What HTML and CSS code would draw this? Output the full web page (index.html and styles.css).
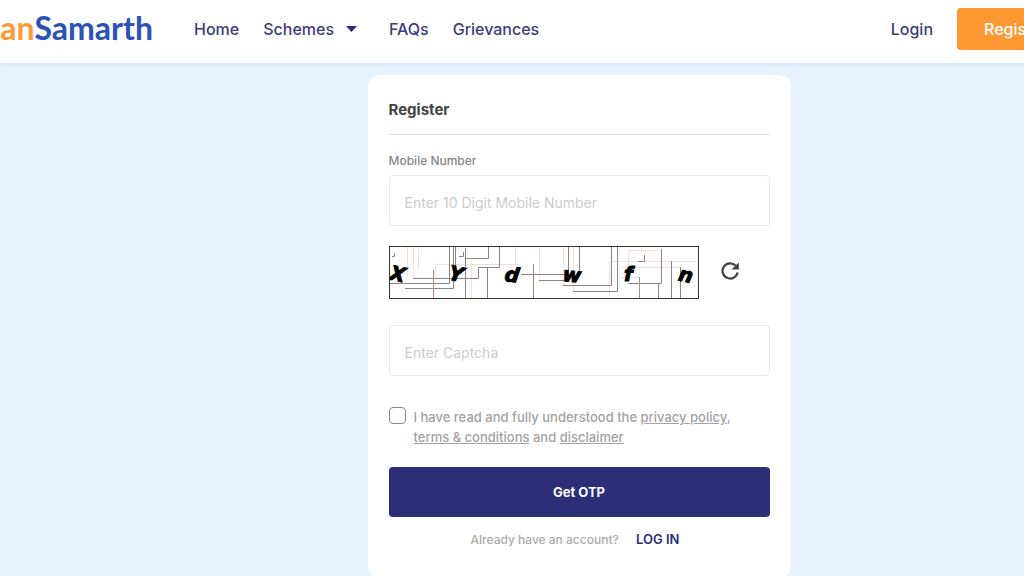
FILE: index.html
```html
<!DOCTYPE html>
<html lang="en">
<head>
    <meta charset="UTF-8">
    <meta name="viewport" content="width=device-width, initial-scale=1.0">
    <title>JanSamarth - Register</title>
    <link rel="stylesheet" href="styles.css">
</head>
<body>
    <div class="page">
        <header>
            <a class="logo" href="#"><span class="logo-jan">Jan</span>Samarth</a>
            <nav>
                <a href="#">Home</a>
                <a href="#" class="has-menu">Schemes
                    <svg width="11" height="6" viewBox="0 0 11 6" aria-hidden="true"><path d="M0 0h11L5.5 6z" fill="#2d2e78"/></svg>
                </a>
                <a href="#">FAQs</a>
                <a href="#">Grievances</a>
            </nav>
            <a class="login" href="#">Login</a>
            <button type="button" class="register-button">Register</button>
        </header>
        <main>
            <form class="card">
                <h1>Register</h1>
                <label class="field-label" for="mobile">Mobile Number</label>
                <input type="text" id="mobile" placeholder="Enter 10 Digit Mobile Number">

                <!-- Captcha image and reload -->
                <div class="captcha">
                    <svg class="captcha-image" width="310" height="53" viewBox="0 0 310 53" role="img" aria-label="Captcha">
                        <g fill="none" stroke="#f6ddd6">
                            <path d="M18.5 1v30M24.5 1v30M29.5 1v23M46.5 30V18.500H130M82.500 14v38M126.500 1v18M150.500 2v30"/>
                            <path d="M174.500 1v38M184.500 1v44M220.500 50V15.500H308M232.500 21.500H292M239.500 21V4.500H270M232 31.500h18"/>
                        </g>
                        <g fill="none" stroke="#8b8380">
                            <path d="M60.500 1v36.500H1M64.500 1v41.500H16M66.500 1v28M24 32.500h65.500v-11h21V1"/>
                            <path d="M76.500 2v50M76 12.500h23.500V1M98.500 21v31M144.500 18v34"/>
                            <path d="M132 28.500h45M150 34.500h29M179.500 1v30M190.500 1v27"/>
                            <path d="M174 39.500h48.500V1M184 45.500h44.500V1M272.500 3v34.500H239M269.500 38v14"/>
                            <path d="M282.500 15v37M291.500 21v31M255.500 9v6.500H249M5.500 7v3.500H3M74.500 6v4.500H70"/>
                        </g>
                        <path d="M44.500 24v28M250.500 31v21" stroke="#b08a80"/>
                        <g class="captcha-text">
                            <text x="1" y="35" transform="rotate(12 9 28)">X</text>
                            <text x="60" y="35" transform="rotate(12 68 28)">Y</text>
                            <text x="116" y="36" transform="rotate(8 124 28)">d</text>
                            <text x="174" y="36" transform="rotate(5 184 28)">w</text>
                            <text x="235" y="35">f</text>
                            <text x="290" y="36" transform="rotate(12 298 28)">n</text>
                        </g>
                        <rect x="0.500" y="0.500" width="309" height="52" fill="none" stroke="#333"/>
                    </svg>
                    <button type="button" class="reload" aria-label="Reload captcha">
                        <svg width="20" height="20" viewBox="0 0 20 20" aria-hidden="true">
                            <path d="M17.600 11.500A7.600 7.600 0 1 1 15.800 4.800" fill="none" stroke="#444" stroke-width="2.200"/>
                            <path d="M18.800 1.500V8.600H11.500z" fill="#444"/>
                        </svg>
                    </button>
                </div>

                <input type="text" id="captcha" placeholder="Enter Captcha" aria-label="Enter Captcha">

                <div class="terms">
                    <input type="checkbox" id="agree">
                    <label for="agree">I have read and fully understood the <a href="#">privacy policy</a>, <a href="#">terms &amp; conditions</a> and <a href="#">disclaimer</a></label>
                </div>

                <button type="submit" class="otp-button">Get OTP</button>
                <p class="account">Already have an account? <a href="#">LOG IN</a></p>
            </form>
        </main>
    </div>
</body>
</html>
```

FILE: styles.css
```css
* {
    box-sizing: border-box;
}

body {
    margin: 0;
    min-height: 100vh;
    overflow-x: hidden;
    background-color: #e6f2ff;
    font-family: Inter, "Liberation Sans", sans-serif;
    color: #444;
}

/* The page runs wider than the window */
.page {
    margin-right: -134px;
}

header {
    display: flex;
    align-items: center;
    height: 63px;
    padding: 0 84px 5px 0;
    background-color: white;
    box-shadow: 0 1px 4px rgba(60, 90, 140, 0.12);
}

header a {
    color: #3d3c7c;
    font-size: 16px;
    font-weight: 500;
    text-decoration: none;
}

header .logo {
    display: flex;
    justify-content: flex-end;
    width: 153px;
    overflow: hidden;
    font-family: Lato, "Liberation Sans", sans-serif;
    font-size: 32px;
    font-weight: bold;
    line-height: 44px;
    padding-bottom: 3px;
    color: #2b52b5;
}

header .logo-jan {
    color: #fd9a3a;
}

nav {
    display: flex;
    gap: 24px;
    margin-left: 41px;
    margin-right: auto;
}

.has-menu {
    display: flex;
    align-items: center;
    gap: 12px;
    margin-right: 8px;
}

.register-button {
    height: 42px;
    margin-left: 24px;
    padding: 0 27px;
    border: none;
    border-radius: 4px;
    background-color: #fe9833;
    color: white;
    font-family: inherit;
    font-size: 16px;
    font-weight: 500;
}

main {
    padding-top: 12px;
}

.card {
    width: 423px;
    margin: 0 auto;
    padding: 20px 21px;
    border-radius: 12px;
    background-color: white;
}

h1 {
    margin: 0 0 16px;
    padding-bottom: 9px;
    border-bottom: 1px solid #e2e2e2;
    font-size: 15px;
    font-weight: 700;
    line-height: 30px;
}

.field-label {
    display: block;
    margin-bottom: 4px;
    color: #888;
    font-size: 12px;
    font-weight: 500;
    line-height: 20px;
}

input[type="text"] {
    display: block;
    width: 100%;
    height: 51px;
    padding: 3px 15px 0;
    border: 1px solid #e8e8e8;
    border-radius: 4px;
    font-family: inherit;
    font-size: 14px;
}

input::placeholder {
    color: #ccc;
}

.captcha {
    display: flex;
    align-items: center;
    gap: 21px;
    margin: 20px 0 26px;
}

.captcha-text {
    fill: black;
    stroke: black;
    font-family: "DejaVu Sans", sans-serif;
    font-size: 20px;
    font-style: italic;
    font-weight: bold;
}

.reload {
    display: flex;
    padding: 0 0 4px;
    border: none;
    background: none;
}

.terms {
    display: flex;
    gap: 8px;
    margin: 31px 0 20px;
    padding-right: 24px;
    color: #a2a2a2;
    font-size: 13px;
    font-weight: 500;
    line-height: 20px;
}

.terms input {
    flex: none;
    appearance: none;
    width: 17px;
    height: 17px;
    margin: 0;
    border: 1px solid #888;
    border-radius: 4px;
}

.terms a {
    color: inherit;
}

.otp-button {
    display: block;
    width: 100%;
    height: 50px;
    border: none;
    border-radius: 4px;
    background-color: #2d2e78;
    color: white;
    font-family: inherit;
    font-size: 13px;
    font-weight: 700;
}

.account {
    margin: 12px 0 8px;
    color: #aaa;
    font-size: 12px;
    font-weight: 500;
    line-height: 20px;
    text-align: center;
}

.account a {
    margin-left: 14px;
    margin-right: 8px;
    color: #2d2e78;
    font-size: 13px;
    font-weight: 600;
    text-decoration: none;
}
```
